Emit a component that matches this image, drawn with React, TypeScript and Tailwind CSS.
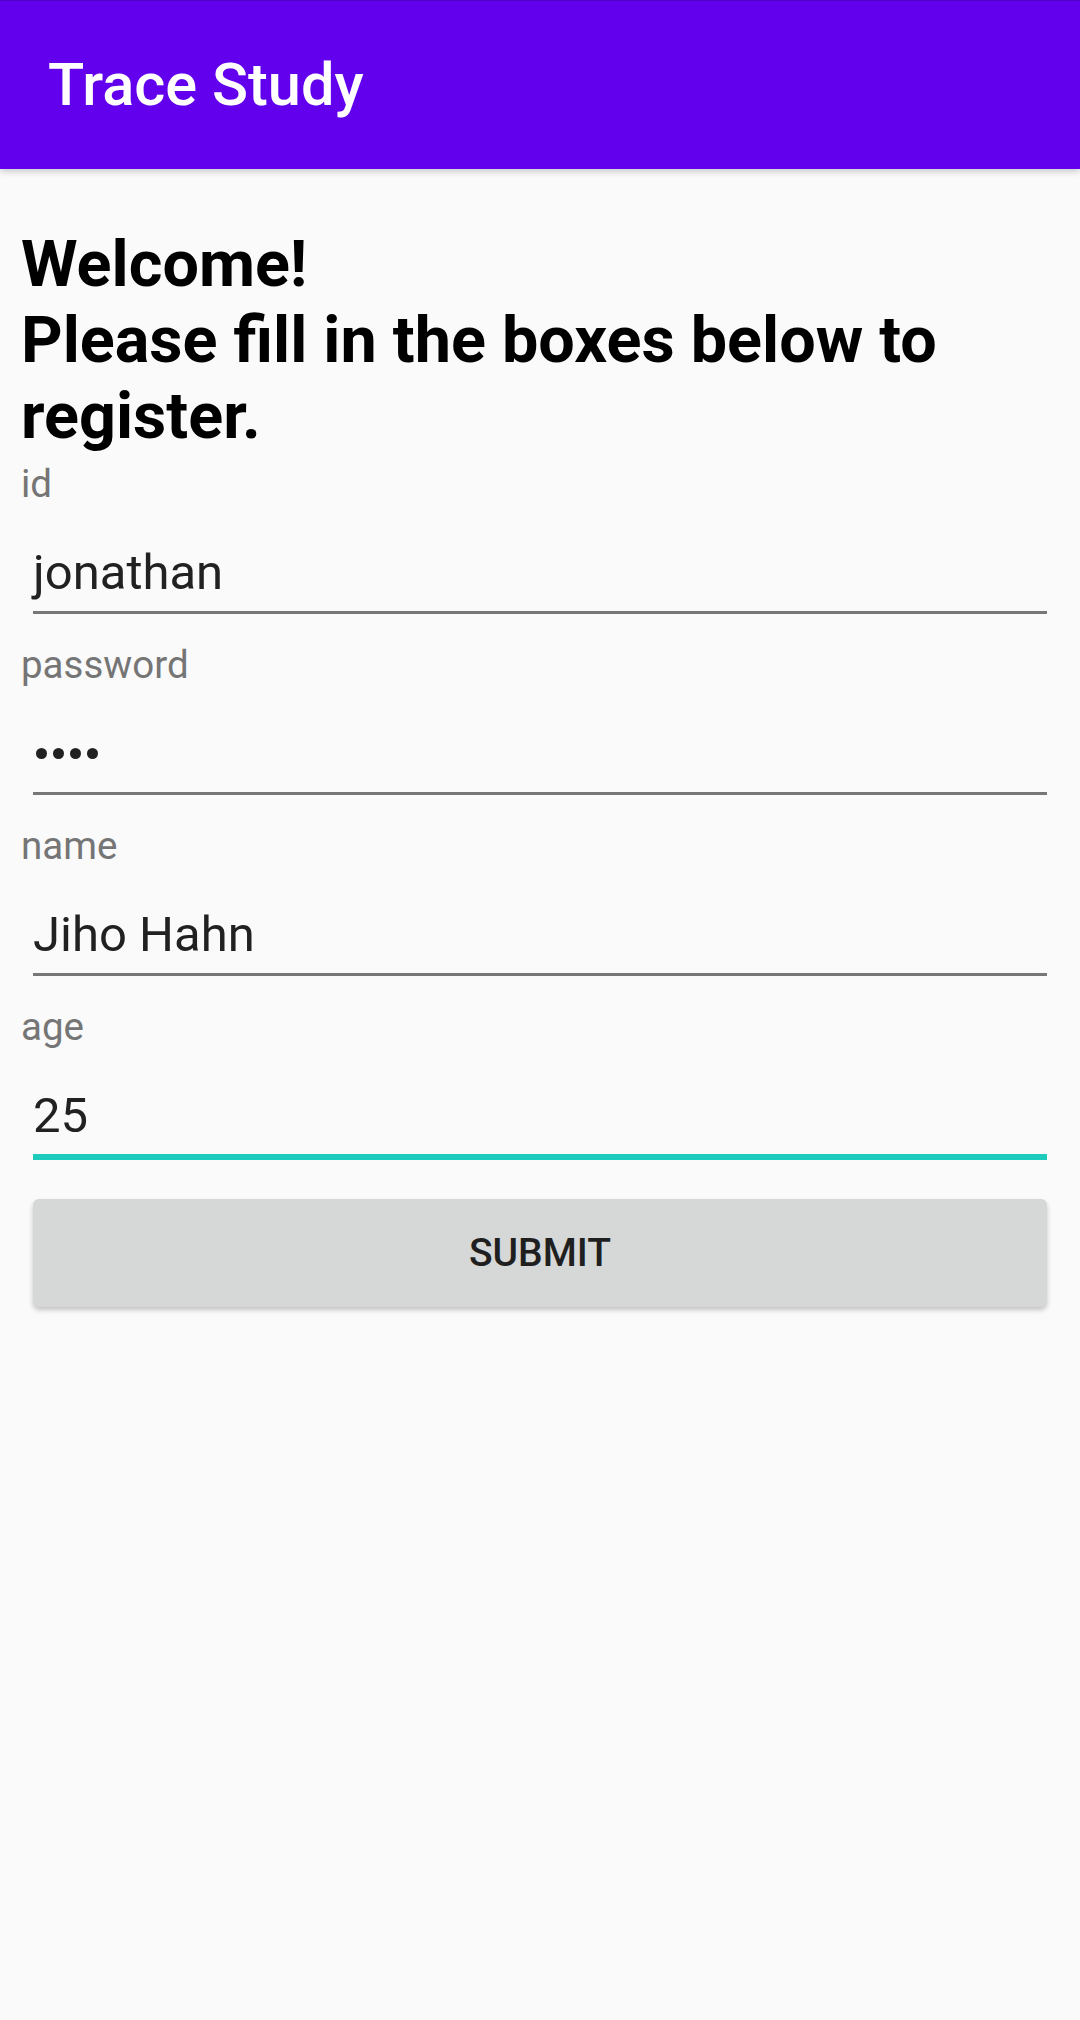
import React from "react";

type FieldProps = { label: string; value: React.ReactNode; focused?: boolean };

function Field({ label, value, focused }: FieldProps) {
  return (
    <div className="h-[181px] flex flex-col">
      <div className="h-[46px] text-[38.5px] leading-[46px] text-[#757575]">{label}</div>
      <div className="mx-[12px] pt-[36px]">
        <div className="h-[59px] text-[49px] leading-[59px] text-[#212121] whitespace-nowrap">{value}</div>
        <div className={focused ? "mt-[9px] h-[6px] bg-[#1CCBBC]" : "mt-[9px] h-[3px] bg-[#777777]"} />
      </div>
    </div>
  );
}

function Dots() {
  return (
    <div className="flex items-center gap-[6px] h-[59px] pl-[3px]">
      <span className="w-[11px] h-[11px] rounded-full bg-[#212121]" />
      <span className="w-[11px] h-[11px] rounded-full bg-[#212121]" />
      <span className="w-[11px] h-[11px] rounded-full bg-[#212121]" />
      <span className="w-[11px] h-[11px] rounded-full bg-[#212121]" />
    </div>
  );
}

export default function App() {
  return (
    <div className="w-[1080px] h-[2020px] bg-[#FAFAFA] font-['Roboto',sans-serif] overflow-hidden">
      <header className="relative h-[169px] bg-[#6200EE] border-t border-[#4F00C2] flex items-center pl-[48px] shadow-[0_3px_6px_rgba(0,0,0,0.18)]">
        <h1 className="text-[59.5px] font-medium text-white leading-none mt-[2px]">Trace Study</h1>
      </header>
      <main className="px-[21px]">
        <h2 className="mt-[57px] text-[64.7px] leading-[76px] font-bold text-black">
          Welcome!
          <br />
          Please fill in the boxes below to register.
        </h2>
        <div className="mt-[7px]">
          <Field label="id" value="jonathan" />
          <Field label="password" value={<Dots />} />
          <Field label="name" value="Jiho Hahn" />
          <Field label="age" value="25" focused />
        </div>
        <button className="mt-[14px] mx-[12px] w-[1014px] h-[108px] rounded-[6px] bg-[#D6D7D7] shadow-[0_3px_5px_rgba(0,0,0,0.22)] text-[39px] font-medium text-[#1F1F1F] flex items-center justify-center">
          SUBMIT
        </button>
      </main>
    </div>
  );
}
